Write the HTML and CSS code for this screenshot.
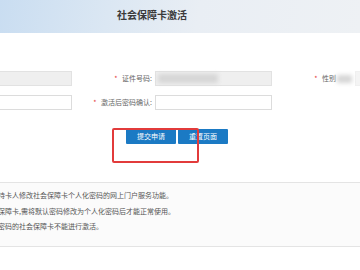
FILE: index.html
```html
<!DOCTYPE html>
<html lang="zh-CN">
<head>
    <meta charset="UTF-8">
    <meta name="viewport" content="width=device-width, initial-scale=1.0">
    <title>社会保障卡激活</title>
    <link rel="stylesheet" href="styles.css">
</head>
<body>
    <div class="header">
        <h1 class="title">社会保障卡激活</h1>
    </div>

    <div class="form">
        <span></span>
        <div class="field readonly"></div>
        <label class="field-label"><i>*</i> 证件号码:</label>
        <div class="field readonly"><span class="masked"></span></div>
        <label class="field-label"><i>*</i> 性别<span class="masked small"></span></label>
        <div class="field readonly faint"></div>

        <span></span>
        <div class="field"></div>
        <label class="field-label"><i>*</i> 激活后密码确认:</label>
        <div class="field"></div>
        <span></span>
        <span></span>
    </div>

    <div class="actions">
        <button class="btn">提交申请</button>
        <button class="btn">重置页面</button>
        <span class="mark"></span>
    </div>

    <div class="notice">
        <p>持卡人修改社会保障卡个人化密码的网上门户服务功能。</p>
        <p>保障卡,需将默认密码修改为个人化密码后才能正常使用。</p>
        <p>密码的社会保障卡不能进行激活。</p>
    </div>
</body>
</html>
```

FILE: styles.css
```css
body {
    margin: 0;
    background: #fff;
    font-family: "Noto Sans CJK SC", "Liberation Sans", sans-serif;
    color: #555;
    overflow: hidden;
}
.header {
    height: 33px;
    padding-left: 117px;
    box-sizing: border-box;
    background: linear-gradient(100deg, #c9ddf1 0%, #dbe7f3 30%, #e9eef4 55%, #eef1f4 100%);
}
.title {
    margin: 0;
    padding-top: 9px;
    font-size: 10px;
    line-height: 12px;
    font-weight: bold;
    color: #3a3a3a;
}
.form {
    display: grid;
    grid-template-columns: repeat(3, 77px 117px);
    grid-auto-rows: 15px;
    column-gap: 3px;
    row-gap: 9px;
    margin: 38px 0 0 -125px;
    width: 600px;
}
.field-label {
    font-size: 7px;
    line-height: 15px;
    text-align: right;
    color: #666;
    white-space: nowrap;
}
.field-label i {
    font-style: normal;
    color: #e4393c;
    margin-right: 3px;
}
.field {
    border: 1px solid #dcdcdc;
    background: #fff;
    box-sizing: border-box;
}
.field.readonly {
    background: #efefef;
    border-color: #e2e2e2;
}
.field.faint {
    background: #f4f4f4;
    border-color: #f0f0f0;
}
.masked {
    display: block;
    width: 60px;
    height: 9px;
    margin: 2px 0 0 2px;
    background: #d6d6d6;
    filter: blur(2px);
}
.masked.small {
    display: inline-block;
    width: 15px;
    height: 8px;
    margin: 0 0 0 1px;
    vertical-align: middle;
}
.actions {
    position: relative;
    display: flex;
    gap: 2px;
    margin-top: 19px;
    padding-left: 126px;
}
.btn {
    width: 50px;
    height: 15px;
    padding: 0;
    border: none;
    border-radius: 1px;
    background: #1b7ac4;
    color: #fff;
    font-family: inherit;
    font-size: 7px;
    line-height: 15px;
}
.mark {
    position: absolute;
    left: 112px;
    top: -1px;
    width: 87px;
    height: 35px;
    box-sizing: border-box;
    border: 2px solid #e23b3b;
    border-radius: 2px;
}
.notice {
    margin: 38px -1px 0;
    padding: 5px 0 11px;
    border: 1px solid #e4e4e4;
    background: #fbfbfb;
}
.notice p {
    margin: 0 0 0 -2px;
    font-size: 7px;
    line-height: 15.5px;
    color: #555;
    white-space: nowrap;
}
```
